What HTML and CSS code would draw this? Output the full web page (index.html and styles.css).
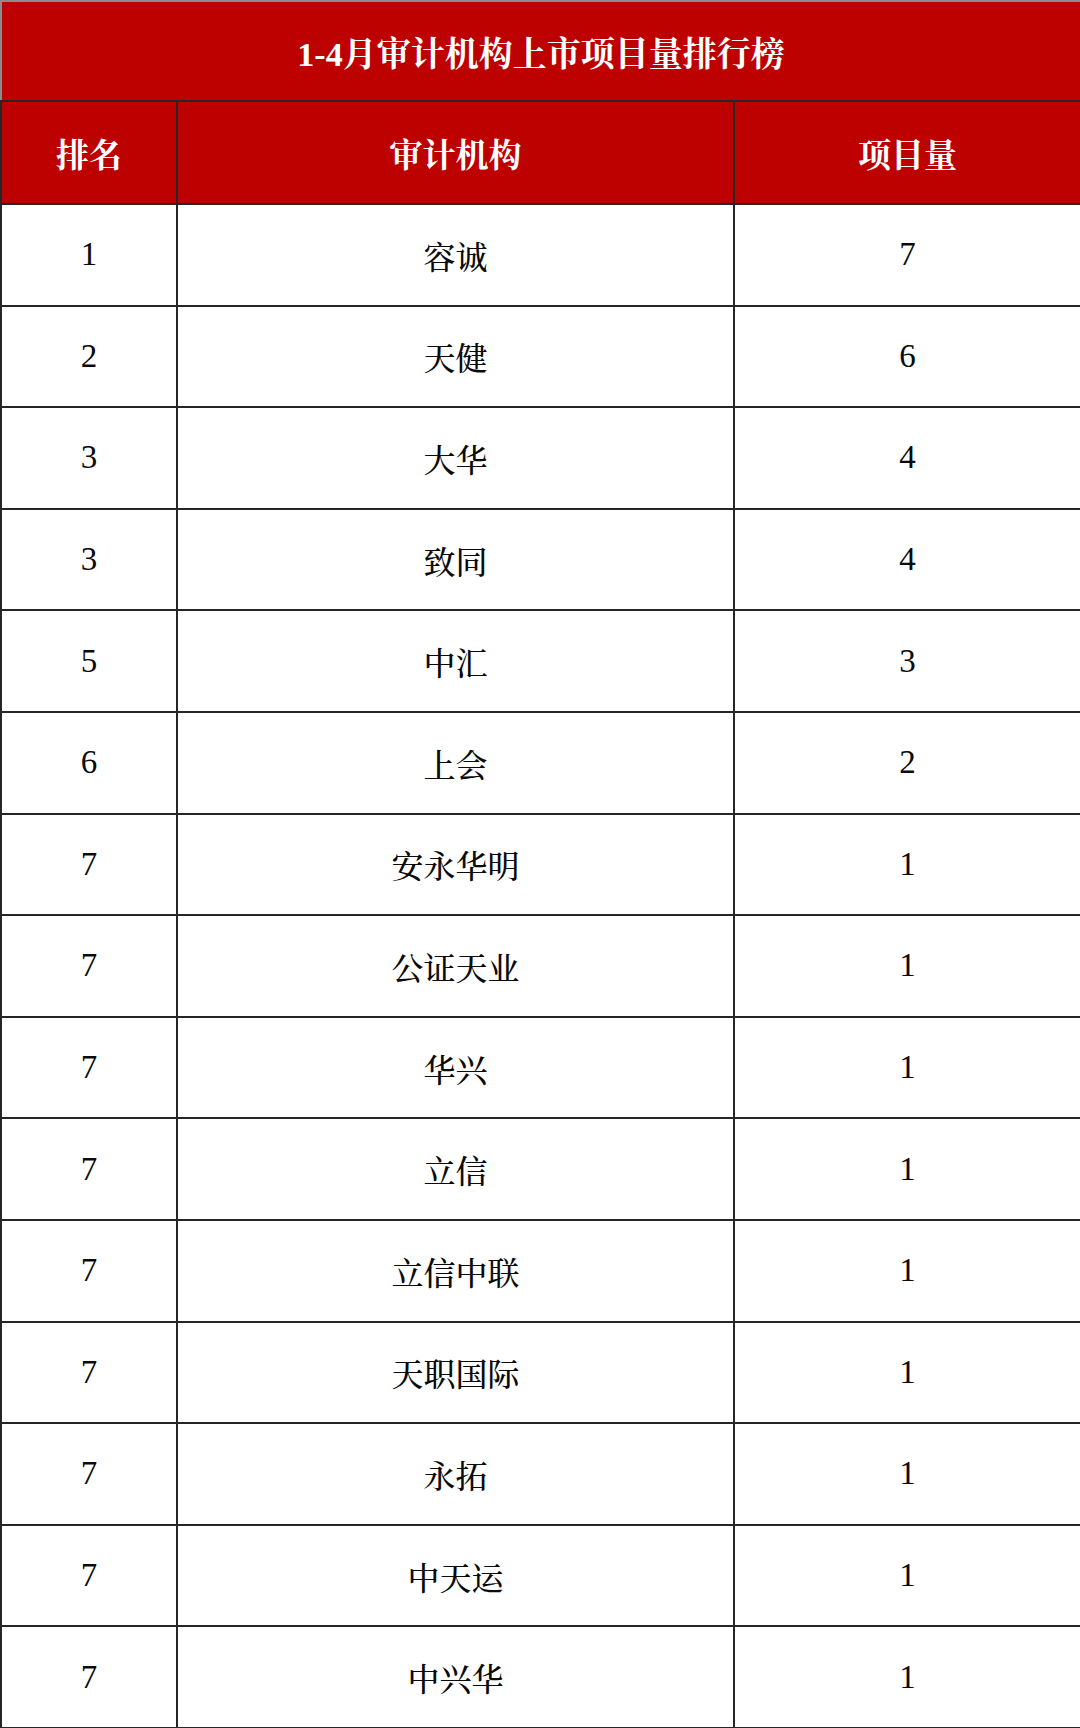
FILE: index.html
```html
<!DOCTYPE html>
<html lang="zh-CN">
<head>
<meta charset="utf-8">
<title>1-4月审计机构上市项目量排行榜</title>
<link rel="stylesheet" href="styles.css">
</head>
<body>
<table class="rank">
  <colgroup>
    <col class="c-rank">
    <col class="c-name">
    <col class="c-count">
  </colgroup>
  <thead>
    <tr class="title-row"><th colspan="3">1-4月审计机构上市项目量排行榜</th></tr>
    <tr class="head-row"><th>排名</th><th>审计机构</th><th>项目量</th></tr>
  </thead>
  <tbody>
    <tr><td>1</td><td>容诚</td><td>7</td></tr>
    <tr><td>2</td><td>天健</td><td>6</td></tr>
    <tr><td>3</td><td>大华</td><td>4</td></tr>
    <tr><td>3</td><td>致同</td><td>4</td></tr>
    <tr><td>5</td><td>中汇</td><td>3</td></tr>
    <tr><td>6</td><td>上会</td><td>2</td></tr>
    <tr><td>7</td><td>安永华明</td><td>1</td></tr>
    <tr><td>7</td><td>公证天业</td><td>1</td></tr>
    <tr><td>7</td><td>华兴</td><td>1</td></tr>
    <tr><td>7</td><td>立信</td><td>1</td></tr>
    <tr><td>7</td><td>立信中联</td><td>1</td></tr>
    <tr><td>7</td><td>天职国际</td><td>1</td></tr>
    <tr><td>7</td><td>永拓</td><td>1</td></tr>
    <tr><td>7</td><td>中天运</td><td>1</td></tr>
    <tr><td>7</td><td>中兴华</td><td>1</td></tr>
  </tbody>
</table>
</body>
</html>
```

FILE: styles.css
```css
html, body {
  margin: 0;
  padding: 0;
  background: #ffffff;
}

.rank {
  width: 1080px;
  table-layout: fixed;
  border-collapse: collapse;
  font-family: "Liberation Serif", "Noto Serif CJK SC", "Noto Sans CJK SC", serif;
  font-size: 33px;
  color: #0a0a0a;
}

.c-rank { width: 176px; }
.c-name { width: 557px; }
.c-count { width: 347px; }

.rank th,
.rank td {
  border: 2px solid #262626;
  text-align: center;
  vertical-align: middle;
  padding: 0;
}

.rank thead th {
  background: #bd0000;
  color: #ffffff;
  font-weight: bold;
}

.title-row th {
  height: 98px;
  font-size: 34px;
  border-top-color: #8c8c8c;
  border-left-color: #8c8c8c;
  border-right-color: #8c8c8c;
}

.head-row th {
  height: 101px;
}

.rank tbody td {
  height: 99.6px;
  font-weight: normal;
}

.rank tbody td:nth-child(2) {
  font-family: "Noto Serif CJK SC", "Noto Sans CJK SC", serif;
  font-size: 32px;
  font-weight: 500;
}
```
